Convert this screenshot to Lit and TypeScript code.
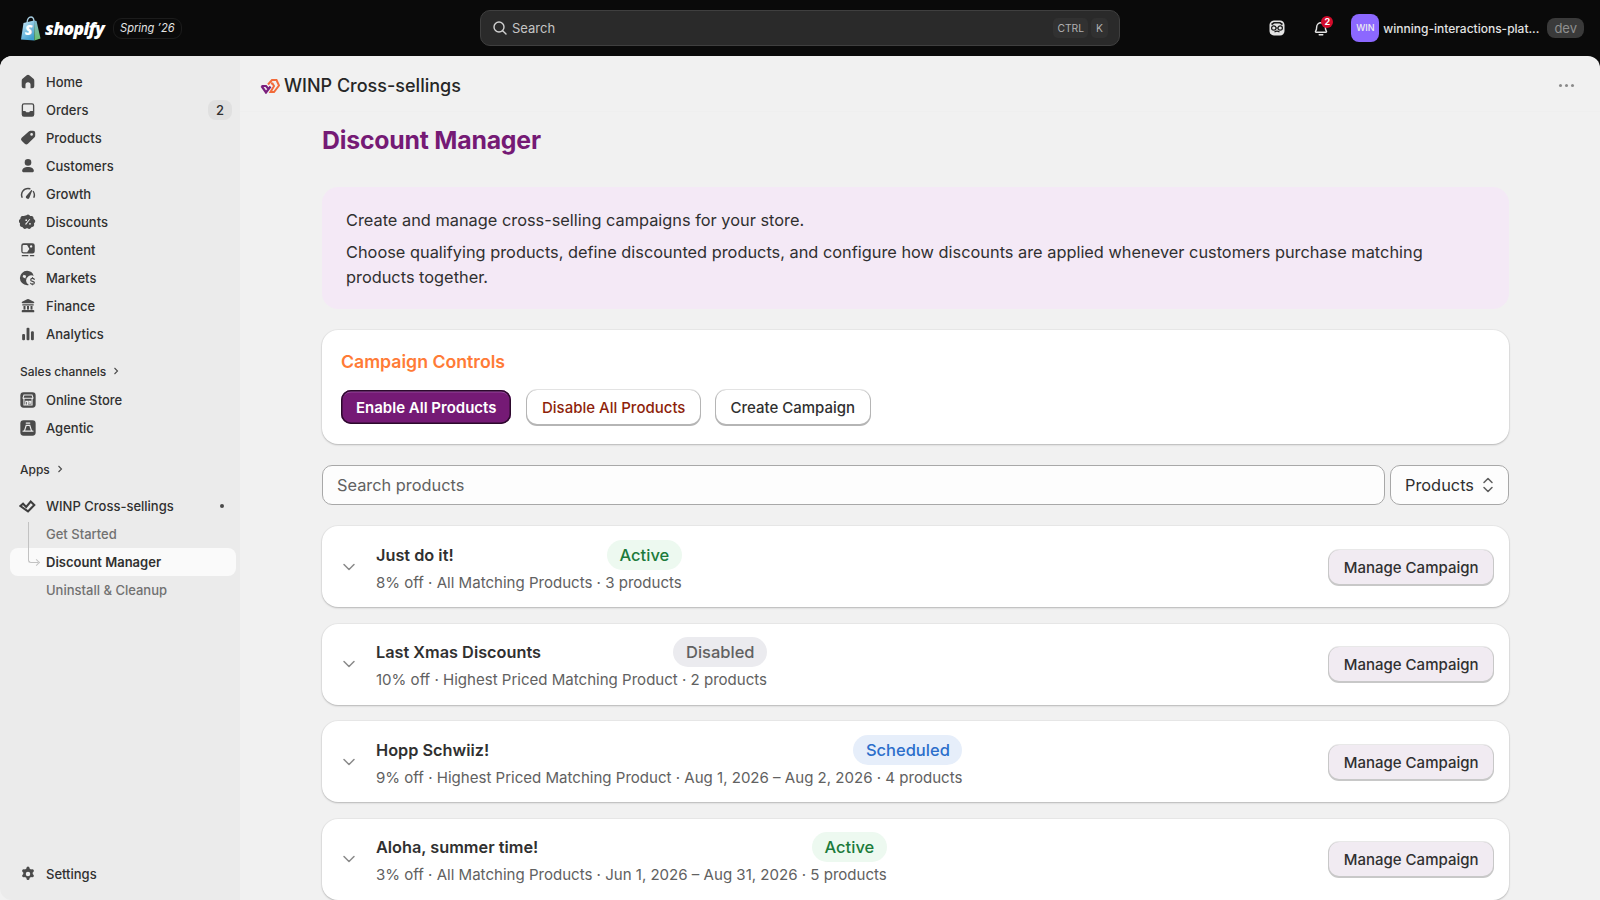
import { LitElement, html, css, svg } from "lit";
import { customElement } from "lit/decorators.js";

const icons: Record<string, unknown> = {
  home: svg`<path d="M8.600 2.600a2.200 2.200 0 0 1 2.800 0l4.700 3.900c.6.500.9 1.200.9 2v6.200a2.300 2.300 0 0 1-2.300 2.300h-1.900v-4a2.800 2.800 0 0 0-5.600 0v4H5.300A2.300 2.300 0 0 1 3 14.700V8.500c0-.8.3-1.500.9-2z"/>`,
  orders: svg`<path fill-rule="evenodd" d="M5.500 2.500A2.500 2.500 0 0 0 3 5v10a2.500 2.500 0 0 0 2.500 2.500h9A2.500 2.500 0 0 0 17 15V5a2.500 2.500 0 0 0-2.500-2.500zm0 1.500h9a1 1 0 0 1 1 1v6h-2.400c-.7 0-1.200.4-1.500 1l-.2.500H8.100l-.2-.5c-.3-.6-.8-1-1.500-1H4.500V5a1 1 0 0 1 1-1z"/>`,
  products: svg`<path fill-rule="evenodd" d="M10.900 2.700a2.500 2.500 0 0 1 1.800-.7h3A2.300 2.300 0 0 1 18 4.300v3a2.500 2.500 0 0 1-.7 1.800l-7.400 7.400a2.500 2.500 0 0 1-3.500 0l-3.400-3.400a2.500 2.500 0 0 1 0-3.500zM14 7.500a1.500 1.500 0 1 0 0-3 1.500 1.500 0 0 0 0 3z"/>`,
  customers: svg`<circle cx="10" cy="6" r="3.700"/><path d="M3.500 15.200C3.500 12.600 6.400 11 10 11s6.500 1.600 6.500 4.200c0 1.300-1 1.800-2 1.800h-9c-1 0-2-.5-2-1.800z"/>`,
  growth: svg`<path d="M10 3a8 8 0 0 0-7.400 11 .9.900 0 0 0 1.600-.7A6.200 6.200 0 0 1 11.800 5a.9.900 0 0 0 .5-1.700A8 8 0 0 0 10 3zM15 7.200a.9.900 0 0 1 1.600-.3A8 8 0 0 1 17.400 14a.9.900 0 0 1-1.600-.7 6.200 6.200 0 0 0-.8-6.100z"/><path d="M13.800 5.600c.5-.2 1 .3.8.8l-2.900 7.500a2 2 0 1 1-3.400-1.900z"/>`,
  discounts: svg`<path fill-rule="evenodd" d="M8.300 2.600a2.400 2.400 0 0 1 3.400 0l.8.800 1.100-.1a2.400 2.400 0 0 1 2.600 2.200l.1 1.100.8.700a2.400 2.400 0 0 1 .2 3.400l-.7.900.2 1.100a2.400 2.400 0 0 1-2 2.800l-1.100.2-.6.900a2.400 2.400 0 0 1-3.300.7l-.9-.6-.9.600a2.400 2.400 0 0 1-3.300-.7l-.6-.9-1.100-.2a2.400 2.400 0 0 1-2-2.800l.2-1.100-.7-.9a2.400 2.400 0 0 1 .2-3.400l.8-.7.1-1.100a2.400 2.400 0 0 1 2.600-2.200l1.100.1zM12.500 7a.8.800 0 0 0-1.100 0L7 11.900a.8.800 0 0 0 1.100 1zM8 9a1 1 0 1 0 0-2 1 1 0 0 0 0 2zm4.200 4a1 1 0 1 0 0-2 1 1 0 0 0 0 2z"/>`,
  content: svg`<path fill-rule="evenodd" d="M5 2.500A2.500 2.500 0 0 0 2.500 5v6.500A2.500 2.500 0 0 0 5 14h10a2.500 2.500 0 0 0 2.500-2.500V5A2.500 2.500 0 0 0 15 2.500zm8.500 2.200a1.300 1.300 0 1 1 0 2.600 1.300 1.300 0 0 1 0-2.600zM4 11V5.500a1 1 0 0 1 1-1h4l2.500 4.500L9 12.500H5A1 1 0 0 1 4 11z"/><rect x="3" y="15.500" width="7.500" height="1.500" rx=".7"/><rect x="12" y="15.500" width="5" height="1.500" rx=".7"/>`,
  markets: svg`<path d="M9 2a8 8 0 0 0 0 16c.7 0 1.300-.1 2-.3a5.500 5.500 0 0 1-.5-9.700 5.500 5.500 0 0 1 5.800-.5A8 8 0 0 0 9 2zM5 6.500l3 1-1 3-3-1.500z"/><path d="M15 9.500v1m0 6v1M17 11.500c-.4-.7-1.100-1-2-1-1.200 0-2 .6-2 1.600 0 2.200 4.100 1.200 4.100 3.300 0 1-.9 1.600-2.100 1.600-1 0-1.700-.4-2.100-1.100" fill="none" stroke="currentColor" stroke-width="1.300" stroke-linecap="round"/>`,
  finance: svg`<path d="M9 2.400a2 2 0 0 1 2 0l5.500 3c.9.500.5 1.600-.5 1.600H4c-1 0-1.400-1.100-.5-1.600z"/><rect x="3.500" y="8" width="13" height="1.500" rx=".5"/><rect x="5" y="10" width="2.200" height="4"/><rect x="8.900" y="10" width="2.200" height="4"/><rect x="12.800" y="10" width="2.200" height="4"/><rect x="3" y="14.500" width="14" height="2.500" rx="1"/>`,
  analytics: svg`<rect x="3.500" y="10" width="3.200" height="7" rx="1.200"/><rect x="8.400" y="3" width="3.200" height="14" rx="1.200"/><rect x="13.300" y="7" width="3.200" height="10" rx="1.200"/>`,
  settings: svg`<path fill-rule="evenodd" d="M8.300 2.300a1.700 1.700 0 0 1 3.400 0l.2 1a6 6 0 0 1 1.400.8l1-.3a1.700 1.700 0 0 1 2 .8 1.700 1.700 0 0 1-.3 2.100l-.8.700a6 6 0 0 1 0 1.600l.8.700a1.700 1.700 0 0 1 .3 2.100 1.700 1.700 0 0 1-2 .8l-1-.3a6 6 0 0 1-1.400.8l-.2 1a1.700 1.700 0 0 1-3.400 0l-.2-1a6 6 0 0 1-1.400-.8l-1 .3a1.700 1.700 0 0 1-2-.8 1.700 1.700 0 0 1 .3-2.100l.8-.7a6 6 0 0 1 0-1.600l-.8-.7a1.700 1.700 0 0 1-.3-2.100 1.700 1.700 0 0 1 2-.8l1 .3a6 6 0 0 1 1.400-.8zM10 11.500a2.500 2.500 0 1 0 0-5 2.500 2.500 0 0 0 0 5z" transform="translate(0 1)"/>`,
  store: svg`<rect x="1.500" y="1.500" width="17" height="17" rx="3.500"/><path d="M5.500 4.500h9l1 3a1.500 1.500 0 0 1-1 1.500v6.500h-9V9a1.500 1.500 0 0 1-1-1.500zM5 8h10M7.500 15.500v-4h2v4M11 11.500h2v2h-2z" fill="none" stroke="#ebebeb" stroke-width="1.200"/>`,
  agentic: svg`<rect x="1.500" y="1.500" width="17" height="17" rx="3.500"/><path d="M8 4.500h4M8 7h4l2 6.500H6zM4.500 13.500h2.200M13.300 13.500h2.200" fill="none" stroke="#ebebeb" stroke-width="1.300" stroke-linecap="round"/>`,
};

const nav = [
  ["home", "Home"],
  ["orders", "Orders", "2"],
  ["products", "Products"],
  ["customers", "Customers"],
  ["growth", "Growth"],
  ["discounts", "Discounts"],
  ["content", "Content"],
  ["markets", "Markets"],
  ["finance", "Finance"],
  ["analytics", "Analytics"],
];

const campaigns = [
  { name: "Just do it!", status: "Active", meta: "8% off · All Matching Products · 3 products" },
  { name: "Last Xmas Discounts", status: "Disabled", meta: "10% off · Highest Priced Matching Product · 2 products" },
  { name: "Hopp Schwiiz!", status: "Scheduled", meta: "9% off · Highest Priced Matching Product · Aug 1, 2026 – Aug 2, 2026 · 4 products" },
  { name: "Aloha, summer time!", status: "Active", meta: "3% off · All Matching Products · Jun 1, 2026 – Aug 31, 2026 · 5 products" },
];

const icon = (name: string) =>
  html`<svg class="nav-icon" viewBox="0 0 20 20" fill="currentColor">${icons[name]}</svg>`;

const chevronRight = html`<svg width="8" height="8" viewBox="0 0 8 8" fill="none" stroke="#4a4a4a" stroke-width="1.100"><path d="M2.500 1l3 3-3 3" /></svg>`;

@customElement("app-root")
export class AppRoot extends LitElement {
  static styles = css`
    :host {
      display: block;
      height: 100vh;
      overflow: hidden;
      background: #0a0a0a;
      font-family: Inter, "Noto Sans", sans-serif;
      color: #303030;
    }
    .topbar {
      height: 56px;
      display: grid;
      grid-template-columns: 1fr 640px 1fr;
      align-items: center;
      color: #e3e3e3;
    }
    .brand {
      display: flex;
      align-items: center;
      padding-left: 20px;
    }
    .wordmark {
      font-family: "Open Sans", sans-serif;
      font-weight: 800;
      font-style: italic;
      font-size: 17.500px;
      letter-spacing: -0.6px;
      color: #fff;
      margin-left: 4px;
    }
    .release {
      margin-left: 9px;
      padding: 2px 6px;
      border: 1px solid #1c1c1c;
      border-radius: 9px;
      font-size: 11.100px;
      font-style: italic;
      line-height: 15px;
      color: #e3e3e3;
    }
    .search {
      height: 36px;
      box-sizing: border-box;
      display: flex;
      align-items: center;
      background: #2a2a2a;
      border: 1px solid #3f3f3f;
      border-radius: 10px;
      padding: 0 11px;
      font-size: 13px;
      color: #c4c4c4;
      gap: 4px;
    }
    .search span.grow {
      flex: 1;
    }
    .kbd {
      background: #313131;
      color: #b0b0b0;
      font-size: 10.300px;
      height: 20px;
      line-height: 20px;
      padding: 0 4px;
      border-radius: 5px;
    }
    .kbd.k {
      padding: 0 5px;
      margin-left: -1px;
    }
    .actions {
      display: flex;
      align-items: center;
      justify-content: flex-end;
      padding-right: 16px;
    }
    .bell {
      position: relative;
      margin-left: 27px;
      display: flex;
    }
    .bell b {
      position: absolute;
      top: -3px;
      right: -3px;
      width: 12px;
      height: 12px;
      border-radius: 50%;
      background: #d20c2b;
      color: #fff;
      font-size: 9px;
      line-height: 12px;
      text-align: center;
    }
    .avatar {
      width: 28px;
      height: 28px;
      border-radius: 8px;
      background: #8c68ff;
      color: #eee;
      font-size: 9px;
      font-weight: 500;
      line-height: 28px;
      text-align: center;
      margin-left: 21px;
    }
    .shop {
      margin-left: 4px;
      font-size: 12px;
      font-weight: 450;
      color: #e3e3e3;
    }
    .dev {
      margin-left: 8px;
      padding: 0 7px;
      height: 20px;
      line-height: 20px;
      border-radius: 8px;
      background: #3a3a3a;
      color: #8f8f8f;
      font-size: 13px;
    }
    .frame {
      height: 844px;
      display: flex;
      border-radius: 12px 12px 0 0;
      overflow: hidden;
      background: #f1f1f1;
    }
    .sidebar {
      width: 240px;
      flex: none;
      box-sizing: border-box;
      background: #ebebeb;
      padding: 12px 4px 12px 10px;
      display: flex;
      flex-direction: column;
      border-bottom-left-radius: 12px;
    }
    .item {
      height: 28px;
      display: flex;
      align-items: center;
      padding-left: 9px;
      font-size: 13px;
      font-weight: 500;
      color: #303030;
      border-radius: 8px;
      flex: none;
      position: relative;
    }
    .nav-icon {
      width: 18px;
      height: 18px;
      margin-right: 9px;
      color: #4a4a4a;
      flex: none;
    }
    .count {
      margin-left: auto;
      margin-right: 4px;
      width: 24px;
      height: 20px;
      line-height: 20px;
      text-align: center;
      border-radius: 8px;
      background: #e0e0e0;
      font-size: 13px;
    }
    .section {
      height: 20px;
      display: flex;
      align-items: center;
      gap: 6px;
      padding-left: 10px;
      font-size: 12px;
      font-weight: 500;
      color: #303030;
    }
    .sales {
      margin-top: 13px;
      margin-bottom: 5px;
    }
    .apps {
      margin-top: 17px;
      margin-bottom: 13px;
    }
    .dot {
      margin-left: auto;
      margin-right: 12px;
      width: 4px;
      height: 4px;
      border-radius: 50%;
      background: #4a4a4a;
    }
    .sub {
      font-weight: 450;
      color: #717171;
      padding-left: 36px;
    }
    .sub.active {
      background: #fafafa;
      color: #303030;
      font-weight: 600;
    }
    .tree {
      position: absolute;
      left: 17.500px;
      top: -14px;
      width: 9px;
      height: 28px;
      border-left: 1px solid #c2c2c2;
      border-bottom: 1px solid #c2c2c2;
      border-bottom-left-radius: 3px;
    }
    .tree::after {
      content: "";
      position: absolute;
      right: -1px;
      bottom: -3px;
      width: 4px;
      height: 4px;
      border-top: 1px solid #c2c2c2;
      border-right: 1px solid #c2c2c2;
      transform: rotate(45deg);
    }
    .tree.up {
      top: 2px;
      height: 26px;
      width: 0;
      border-bottom: 0;
      border-radius: 0;
    }
    .tree.up::after {
      display: none;
    }
    .spacer {
      flex: 1;
    }
    main {
      flex: 1;
      min-width: 0;
      display: flex;
      flex-direction: column;
    }
    .app-header {
      height: 56px;
      flex: none;
      box-sizing: border-box;
      border-bottom: 1px solid #efefef;
      display: flex;
      align-items: center;
      padding: 4px 26px 0 20px;
      font-size: 18px;
      font-weight: 500;
      color: #262626;
      gap: 4px;
    }
    .more {
      margin-left: auto;
      display: flex;
      gap: 2.500px;
    }
    .more i {
      width: 3.500px;
      height: 3.500px;
      border-radius: 50%;
      background: #8a8a8a;
    }
    .page {
      padding: 0 91px 0 82px;
      display: flex;
      flex-direction: column;
    }
    h1 {
      margin: 11px 0 30px;
      font-size: 24.800px;
      line-height: 34px;
      font-weight: 650;
      color: #751a75;
      letter-spacing: -0.2px;
    }
    .banner {
      background: #f4e9f6;
      border-radius: 16px;
      padding: 21px 24px 19px;
      font-size: 16.350px;
      line-height: 25px;
      color: #303030;
      height: 122px;
      box-sizing: border-box;
    }
    .banner p {
      margin: 0 0 7px;
    }
    .panel {
      background: #fff;
      border-radius: 16px;
      box-shadow: 0 1px 2px rgba(0, 0, 0, 0.22), 0 0 0 1px rgba(0, 0, 0, 0.03);
    }
    .controls {
      margin-top: 21px;
      height: 114px;
      box-sizing: border-box;
      padding: 20px 19px;
    }
    h2 {
      margin: 0 0 16px;
      font-size: 17.700px;
      line-height: 24px;
      font-weight: 600;
      color: #ff7b36;
    }
    .buttons {
      display: flex;
      gap: 16px;
    }
    .btn {
      height: 34px;
      box-sizing: border-box;
      padding: 1px 14.500px 0;
      border: 0;
      border-radius: 10px;
      background: #fff;
      font: 500 15px/33px Inter, sans-serif;
      color: #303030;
      box-shadow: 0 1px 0 1px #b5b5b5, 0 0 0 1px #e3e3e3;
      white-space: nowrap;
    }
    .btn.primary {
      background: #751a75;
      color: #fff;
      font-weight: 600;
      padding: 1px 15px 0;
      box-shadow: inset 0 0 0 1.500px #2c0a2c, inset 0 2.500px 0 #93479a;
    }
    .btn.danger {
      color: #8e1f0b;
    }
    .filters {
      margin-top: 21px;
      display: flex;
      gap: 5px;
    }
    .field,
    .select {
      height: 40px;
      box-sizing: border-box;
      border: 1px solid #a8a8a8;
      border-radius: 10px;
      background: #fdfdfd;
      display: flex;
      align-items: center;
      font-size: 16.350px;
      padding: 0 14px;
    }
    .field {
      flex: 1;
      color: #616161;
    }
    .select {
      width: 119px;
      color: #303030;
      justify-content: space-between;
    }
    .list {
      margin-top: 21px;
      display: flex;
      flex-direction: column;
      gap: 16.500px;
    }
    .row {
      height: 81px;
      box-sizing: border-box;
      display: flex;
      align-items: center;
      padding: 0 16px 0 20px;
    }
    .chev {
      flex: none;
      margin-right: 20px;
      color: #8a8a8a;
      display: flex;
    }
    .info {
      display: inline-flex;
      flex-direction: column;
    }
    .title-line {
      display: flex;
      align-items: center;
      justify-content: space-between;
      gap: 16px;
    }
    .title {
      font-size: 16.300px;
      font-weight: 600;
      color: #303030;
    }
    .badge {
      height: 30px;
      line-height: 30px;
      padding: 0 12.500px;
      border-radius: 15px;
      font-size: 16.500px;
      font-weight: 500;
    }
    .Active {
      background: #edf9f0;
      color: #1c7b3b;
    }
    .Disabled {
      background: #ebebef;
      color: #616161;
    }
    .Scheduled {
      background: #e6eefa;
      color: #2c6ecb;
    }
    .meta {
      margin-top: 1px;
      font-size: 15.050px;
      line-height: 23px;
      color: #616161;
    }
    .manage {
      margin-left: auto;
      background: #f1ebf2;
      color: #303030;
      box-shadow: 0 1px 0 1px #c8c8c8, 0 0 0 1px #e8e8e8;
    }
  `;

  render() {
    return html`
      <div class="topbar">
        <div class="brand">
          <svg width="21" height="25" viewBox="0 0 21 25">
            <defs>
              <linearGradient id="bagL" x1="0" y1="0" x2="0.600" y2="1">
                <stop offset="0" stop-color="#cfe9f5" /><stop offset="1" stop-color="#3f9fd0" />
              </linearGradient>
              <linearGradient id="bagR" x1="0" y1="0" x2="0" y2="1">
                <stop offset="0" stop-color="#7fb8d8" /><stop offset="1" stop-color="#6bbf6a" />
              </linearGradient>
            </defs>
            <path d="M1 23.500L3.500 7 14 4.500l.5 20z" fill="url(#bagL)" />
            <path d="M14 4.500l2.500.5L20.500 22.500l-6 2z" fill="url(#bagR)" />
            <path d="M7 7C7.300 3.500 9 1 11 1s2.800 1.800 3 4" fill="none" stroke="#a9cfe2" stroke-width="1.300" />
            <text x="8.500" y="19" text-anchor="middle" fill="#fff" font-family="Open Sans, sans-serif" font-weight="800" font-style="italic" font-size="14">S</text>
          </svg>
          <span class="wordmark">shopify</span>
          <span class="release">Spring ’26</span>
        </div>
        <div class="search">
          <svg width="16" height="16" viewBox="0 0 16 16" fill="none" stroke="#d0d0d0" stroke-width="1.400">
            <circle cx="7" cy="7" r="5" /><path d="M10.700 10.700L14 14" stroke-linecap="round" />
          </svg>
          <span class="grow">Search</span>
          <span class="kbd">CTRL</span><span class="kbd k">K</span>
        </div>
        <div class="actions">
          <svg width="16" height="16" viewBox="0 0 16 16">
            <path d="M5 .5h6c2.500 0 4.500 2 4.500 4.500v6c0 2.500-2 4.500-4.500 4.500H5C2.500 15.500.5 13.500.5 11V5C.5 2.500 2.500.5 5 .5z" fill="#e3e3e3" />
            <path d="M2.500 4.500L5 2.800h6l2.500 1.700" fill="none" stroke="#1a1a1a" stroke-width="1.600" />
            <circle cx="4.800" cy="8" r="2.200" fill="none" stroke="#1a1a1a" stroke-width="1.200" />
            <circle cx="11.200" cy="8" r="2.200" fill="none" stroke="#1a1a1a" stroke-width="1.200" />
            <path d="M7 8h2M5.500 12c1.500-1 3.500-1 5 0" fill="none" stroke="#1a1a1a" stroke-width="1.200" />
          </svg>
          <span class="bell">
            <svg width="18" height="18" viewBox="0 0 20 20" fill="none" stroke="#e3e3e3" stroke-width="1.600">
              <path d="M4 13.500c1-1.200 1.200-2.300 1.200-4.500a4.800 4.800 0 0 1 9.600 0c0 2.200.2 3.300 1.200 4.500.4.500 0 1.200-.6 1.200H4.600c-.6 0-1-.7-.6-1.200z" />
              <path d="M8 17.500h4" stroke-linecap="round" />
            </svg>
            <b>2</b>
          </span>
          <span class="avatar">WIN</span>
          <span class="shop">winning-interactions-plat...</span>
          <span class="dev">dev</span>
        </div>
      </div>
      <div class="frame">
        <nav class="sidebar">
          ${nav.map(
            ([ic, label, count]) => html`
              <div class="item">${icon(ic)}${label}${count ? html`<span class="count">${count}</span>` : ""}</div>
            `,
          )}
          <div class="section sales">Sales channels ${chevronRight}</div>
          <div class="item">${icon("store")}Online Store</div>
          <div class="item">${icon("agentic")}Agentic</div>
          <div class="section apps">Apps ${chevronRight}</div>
          <div class="item">
            <svg class="nav-icon" viewBox="0 0 20 16">
              <path d="M1.500 8l3-2.500 3.500 3.500L13 3l4 4-7 7z" fill="none" stroke="#3d3d3d" stroke-width="2.300" />
            </svg>
            WINP Cross-sellings<span class="dot"></span>
          </div>
          <div class="item sub"><span class="tree up"></span>Get Started</div>
          <div class="item sub active"><span class="tree"></span>Discount Manager</div>
          <div class="item sub">Uninstall &amp; Cleanup</div>
          <div class="spacer"></div>
          <div class="item">${icon("settings")}Settings</div>
        </nav>
        <main>
          <div class="app-header">
            <svg viewBox="0 0 20 16" width="20" height="16" fill="none">
              <path d="M1.500 8H6l3 3.500M1.500 8L6 14.500l4.500-6" stroke="#7a1f7d" stroke-width="2.200" />
              <path d="M8 6.500L12 2h4.500L19 7.500 14 14h-3.500l3.500-6-1.500-2.500H11" stroke="#f26b3a" stroke-width="2" />
            </svg>
            <span>WINP Cross-sellings</span>
            <span class="more"><i></i><i></i><i></i></span>
          </div>
          <div class="page">
            <h1>Discount Manager</h1>
            <div class="banner">
              <p>Create and manage cross-selling campaigns for your store.</p>
              <p>Choose qualifying products, define discounted products, and configure how discounts are applied whenever customers purchase matching products together.</p>
            </div>
            <section class="panel controls">
              <h2>Campaign Controls</h2>
              <div class="buttons">
                <button class="btn primary">Enable All Products</button>
                <button class="btn danger">Disable All Products</button>
                <button class="btn">Create Campaign</button>
              </div>
            </section>
            <div class="filters">
              <div class="field">Search products</div>
              <div class="select">
                Products
                <svg width="12" height="18" viewBox="0 0 12 18" fill="none" stroke="#5c5c5c" stroke-width="1.500" stroke-linecap="round" stroke-linejoin="round">
                  <path d="M2 6.500L6 2.500l4 4M2 11.500l4 4 4-4" />
                </svg>
              </div>
            </div>
            <div class="list">
              ${campaigns.map(
                (c) => html`
                  <div class="panel row">
                    <span class="chev">
                      <svg width="14" height="14" viewBox="0 0 14 14" fill="none" stroke="currentColor" stroke-width="1.500" stroke-linecap="round" stroke-linejoin="round">
                        <path d="M2 4.500l5 5 5-5" />
                      </svg>
                    </span>
                    <div class="info">
                      <div class="title-line">
                        <span class="title">${c.name}</span>
                        <span class="badge ${c.status}">${c.status}</span>
                      </div>
                      <div class="meta">${c.meta}</div>
                    </div>
                    <button class="btn manage">Manage Campaign</button>
                  </div>
                `,
              )}
            </div>
          </div>
        </main>
      </div>
    `;
  }
}
